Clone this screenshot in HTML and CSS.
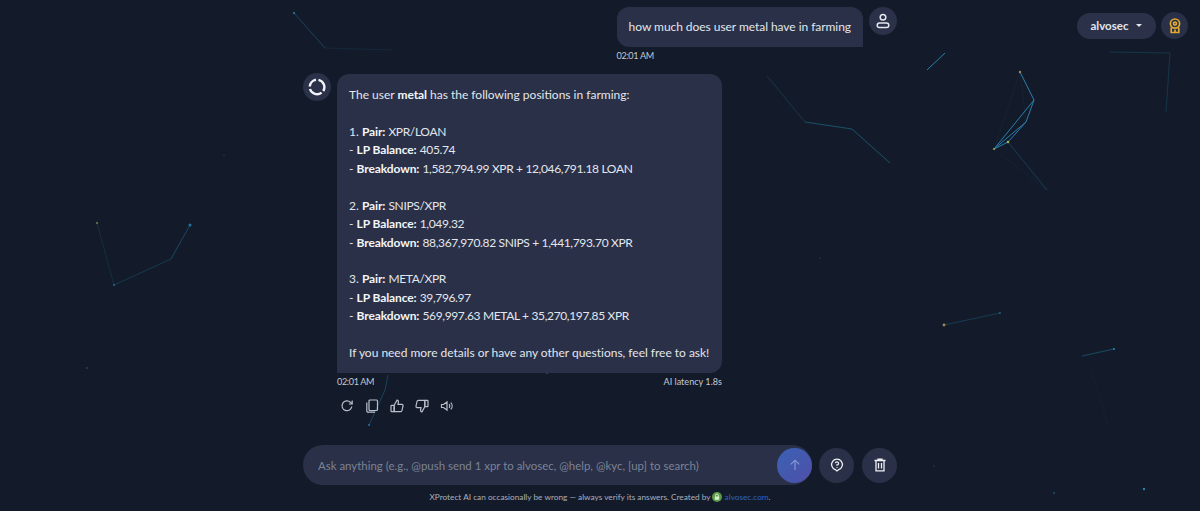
FILE: index.html
```html
<!DOCTYPE html>
<html lang="en">
<head>
    <meta charset="UTF-8">
    <title>XProtect AI</title>
    <link rel="stylesheet" href="styles.css">
</head>
<body>
<!-- particle background -->
<svg class="particles" width="1200" height="511" viewBox="0 0 1200 511">
    <g fill="none" stroke="#1f6f8f" stroke-width=".8">
        <path d="M294 13L325 48" opacity=".6"/>
        <path d="M325 48L393 50" opacity=".2"/>
        <path d="M97 223L114 285" opacity=".3"/>
        <path d="M114 285L171 259" opacity=".45"/>
        <path d="M171 259L190 225" opacity=".7"/>
        <path d="M767 76L805 122" opacity=".4"/>
        <path d="M805 122L852 129L890 163" opacity=".8"/>
        <path d="M945 53L927 70" stroke="#2682a8" stroke-width="1"/>
        <path d="M1110 52L1170 53L1166 112" opacity=".4"/>
        <path d="M1020 72L1034 100L1026 122L994 149L1034 100" stroke="#2a7fb0" stroke-width="1"/>
        <path d="M994 149L1008 142L1026 122" stroke="#2a7fb0" stroke-width="1"/>
        <path d="M1008 142L1047 190" opacity=".55"/>
        <path d="M1020 72L1026 122M1020 72L994 149M994 149L1047 190" opacity=".12"/>
        <path d="M944 325L1000 313" opacity=".5"/>
        <path d="M1082 356L1114 349" opacity=".7"/>
        <path d="M1090 365L1108 425" opacity=".08"/>
        <path d="M388 375L385 390L369 425" opacity=".6"/>
    </g>
    <g fill="#2a87b8">
        <circle cx="294" cy="13" r="1.2" opacity=".7"/>
        <circle cx="190" cy="225" r="1.5" opacity=".8"/>
        <circle cx="114" cy="285" r="1" opacity=".7"/>
        <circle cx="97" cy="223" r="1.2" fill="#55694a"/>
        <circle cx="1020" cy="72" r="1.2" fill="#a08a50"/>
        <circle cx="994" cy="149" r="1" fill="#a3b04f"/>
        <circle cx="1008" cy="142" r="1.3" fill="#a3b04f"/>
        <circle cx="944" cy="325" r="1.4" fill="#a08a50"/>
        <circle cx="1114" cy="349" r="1"/>
        <circle cx="1000" cy="313" r="1" opacity=".6"/>
        <circle cx="1144" cy="489" r="1.2"/>
        <circle cx="1054" cy="493" r="1" opacity=".5"/>
        <circle cx="934" cy="466" r=".8" opacity=".4"/>
        <circle cx="87" cy="368" r="1" opacity=".4"/>
        <circle cx="224" cy="155" r=".8" opacity=".3"/>
        <circle cx="820" cy="258" r=".8" opacity=".3"/>
        <circle cx="547" cy="373" r="1" opacity=".6"/>
        <circle cx="369" cy="425" r="1" opacity=".8"/>
    </g>
</svg>

<!-- account menu -->
<div class="account">
    <div class="account-name">alvosec <span class="caret"></span></div>
    <div class="round-btn small">
        <svg width="16" height="18" viewBox="0 0 16 18" fill="none" stroke="#dfa82f" stroke-width="1.7">
            <circle cx="8" cy="6.6" r="4.6"/>
            <circle cx="8" cy="6.6" r="1.5"/>
            <path d="M4.2 10.5V15.5H11.8V10.5M8 12.5V15.5"/>
        </svg>
    </div>
</div>

<div class="chat">
    <div class="msg msg-user">
        <div class="msg-body">
            <div class="bubble">how much does user metal have in farming</div>
            <div class="meta"><span class="num">02:01 AM</span></div>
        </div>
        <div class="avatar">
            <svg width="16" height="16" viewBox="0 0 16 16" fill="none" stroke="#e4e7ee" stroke-width="1.5">
                <circle cx="8" cy="4.2" r="2.8"/>
                <rect x="2.2" y="10" width="11.6" height="4.5" rx="2.25"/>
            </svg>
        </div>
    </div>

    <div class="msg msg-bot">
        <div class="avatar">
            <svg width="18" height="18" viewBox="0 0 18 18" fill="none" stroke="#f2f4f8" stroke-width="2.4">
                <path d="M10.5 1.9A7.3 7.3 0 0 1 15.2 13"/>
                <path d="M13.6 14.6A7.3 7.3 0 0 1 2 11"/>
                <path d="M1.8 8.5A7.3 7.3 0 0 1 8 1.8"/>
            </svg>
        </div>
        <div class="msg-body">
            <div class="bubble">
                <p>The user <b>metal</b> has the following positions in farming:</p>
                <p>1. <b>Pair:</b> <span class="num">XPR/LOAN</span><br>
                - <b>LP Balance:</b> <span class="num">405.74</span><br>
                - <b>Breakdown:</b> <span class="num">1,582,794.99 XPR + 12,046,791.18 LOAN</span></p>
                <p>2. <b>Pair:</b> <span class="num">SNIPS/XPR</span><br>
                - <b>LP Balance:</b> <span class="num">1,049.32</span><br>
                - <b>Breakdown:</b> <span class="num">88,367,970.82 SNIPS + 1,441,793.70 XPR</span></p>
                <p>3. <b>Pair:</b> <span class="num">META/XPR</span><br>
                - <b>LP Balance:</b> <span class="num">39,796.97</span><br>
                - <b>Breakdown:</b> <span class="num">569,997.63 METAL + 35,270,197.85 XPR</span></p>
                <p class="last-line">If you need more details or have any other questions, feel free to ask!</p>
            </div>
            <div class="meta"><span class="num">02:01 AM</span><span>AI latency 1.8s</span></div>
            <div class="actions">
                <svg width="14" height="14" viewBox="0 0 14 14" fill="none" stroke="#b9bec9" stroke-width="1.2">
                    <path d="M11.8 7.5A4.9 4.9 0 1 1 10.4 3.3L12 4.8"/>
                    <path d="M12.2 1.6V5H8.9"/>
                </svg>
                <svg width="14" height="14" viewBox="0 0 14 14" fill="none" stroke="#b9bec9" stroke-width="1.2">
                    <rect x="4" y="1" width="8.5" height="10.5" rx="1"/>
                    <path d="M1.8 3.5V12a1.2 1.2 0 0 0 1.2 1.2H10"/>
                </svg>
                <svg width="14" height="14" viewBox="0 0 14 14" fill="none" stroke="#b9bec9" stroke-width="1.2">
                    <path d="M4.2 6.3L7 1.2C8.2 1.2 8.6 2.2 8.4 3.2L8 5.4H12C12.8 5.4 13.2 6 13 6.8L12 11.5C11.9 12.2 11.4 12.6 10.7 12.6H4.2Z"/>
                    <rect x="1" y="6.3" width="3.2" height="6.3" rx=".6"/>
                </svg>
                <svg width="14" height="14" viewBox="0 0 14 14" fill="none" stroke="#b9bec9" stroke-width="1.2">
                    <path d="M9.8 7.7L7 12.8C5.8 12.8 5.4 11.8 5.6 10.8L6 8.6H2C1.2 8.6 .8 8 1 7.2L2 2.5C2.1 1.8 2.6 1.4 3.3 1.4H9.8Z"/>
                    <rect x="9.8" y="1.4" width="3.2" height="6.3" rx=".6"/>
                </svg>
                <svg width="14" height="14" viewBox="0 0 14 14" fill="none" stroke="#b9bec9" stroke-width="1.2">
                    <path d="M1.5 5.5H3.5L7 3V11L3.5 8.5H1.5Z"/>
                    <path d="M9 5.2a2.5 2.5 0 0 1 0 3.6M10.8 3.6a5 5 0 0 1 0 6.8"/>
                </svg>
            </div>
        </div>
    </div>

    <div class="composer">
        <div class="input">
            <span class="placeholder">Ask anything (e.g., @push send 1 xpr to alvosec, @help, @kyc, [up] to search)</span>
            <div class="round-btn send">
                <svg width="12" height="12" viewBox="0 0 12 12" fill="none" stroke="#8c9bd6" stroke-width="1.1">
                    <path d="M6 11V1.2M1.8 5.4L6 1.2L10.2 5.4"/>
                </svg>
            </div>
        </div>
        <div class="round-btn">
            <svg width="14" height="14" viewBox="0 0 14 14" fill="none" stroke="#eef0f5" stroke-width="1.3">
                <path d="M7 13L5.3 11.6A5.4 5.4 0 1 1 8.7 11.6Z"/>
                <path d="M5.4 5.2A1.6 1.6 0 1 1 7 7V7.8M7 9V9.8"/>
            </svg>
        </div>
        <div class="round-btn">
            <svg width="14" height="14" viewBox="0 0 14 14" fill="none" stroke="#eef0f5" stroke-width="1.3">
                <path d="M1.5 2.5H12.5M3 2.5V12.8H11V2.5M5.5 5V10.5M8.5 5V10.5M5 2.5V1.2H9V2.5"/>
            </svg>
        </div>
    </div>

    <div class="footer">
        XProtect AI can occasionally be wrong — always verify its answers. Created by
        <svg class="lock" width="10" height="10" viewBox="0 0 10 10">
            <circle cx="5" cy="5" r="5" fill="#5a9a4a"/>
            <rect x="2.8" y="4.4" width="4.4" height="3.4" fill="#d7edc8"/>
            <path d="M3.6 4.4V3.4a1.4 1.4 0 0 1 2.8 0V4.4" fill="none" stroke="#d7edc8"/>
        </svg>
        <a href="#">alvosec.com</a>.
    </div>
</div>
</body>
</html>
```

FILE: styles.css
```css
*{ margin:0; padding:0; box-sizing:border-box; }
html,body{ height:100%; }
body{ background:#131b2a; color:#e3e6ec; font-family:"Lato","Noto Sans",sans-serif; font-size:12px; overflow:hidden; }

.particles{ position:absolute; left:0; top:0; }

.account{ position:absolute; top:12px; right:12px; display:flex; align-items:center; gap:5px; }
.account-name{ width:79px; height:26px; border-radius:13px; background:#2a3148; display:flex; align-items:center; justify-content:center; gap:8px; font-size:11.5px; font-weight:700; }
.caret{ width:0; height:0; border:3px solid transparent; border-top-color:#e3e6ec; border-bottom:0; }

.chat{ position:relative; width:594px; margin:0 auto; padding-top:7px; }

.msg{ display:flex; gap:6px; }
.msg-user{ justify-content:flex-end; }
.msg-bot{ margin-top:12px; }
.msg-bot .avatar{ margin-top:-1px; }
.msg-bot .msg-body{ width:385px; }

.avatar{ width:28px; height:28px; border-radius:50%; background:#2a3148; display:flex; align-items:center; justify-content:center; flex-shrink:0; }

.bubble{ background:#293047; border-radius:12px; line-height:18.45px; padding:12px; }
.bubble p{ margin-bottom:18.45px; }
.bubble p:last-child{ margin:0; }
.bubble b{ font-weight:700; color:#f3f5f9; letter-spacing:-.1px; }
.bubble .last-line{ white-space:nowrap; letter-spacing:-.02px; }
.num{ letter-spacing:-.35px; }
.msg-user .bubble{ height:40px; border-bottom-right-radius:0; line-height:16px; letter-spacing:-.05px; }
.msg-bot .bubble{ height:299px; border-bottom-left-radius:0; }

.meta{ display:flex; justify-content:space-between; font-size:9.1px; color:#c3c8d2; margin-top:2px; line-height:13px; }

.actions{ display:flex; align-items:center; gap:11px; padding:11px 3px 0 3px; }

.composer{ position:absolute; top:445px; left:0; width:100%; display:flex; align-items:center; gap:8px; }
.input{ flex:1; height:40px; margin-right:-1px; background:#293047; border-radius:20px; display:flex; align-items:center; justify-content:space-between; padding-left:15px; }
.placeholder{ color:#7c8396; font-size:11.45px; }

.round-btn{ width:35px; height:35px; border-radius:50%; background:#293047; display:flex; align-items:center; justify-content:center; flex-shrink:0; }
.round-btn.small{ width:27px; height:27px; }
.round-btn.send{ background:linear-gradient(135deg,#3a62b4,#4f4fa8); }

.footer{ position:absolute; top:491px; left:0; width:100%; text-align:center; font-size:8.25px; line-height:12px; color:#aab0bd; white-space:nowrap; }
.footer a{ color:#2f62c0; text-decoration:none; }
.lock{ vertical-align:-2px; }
```
